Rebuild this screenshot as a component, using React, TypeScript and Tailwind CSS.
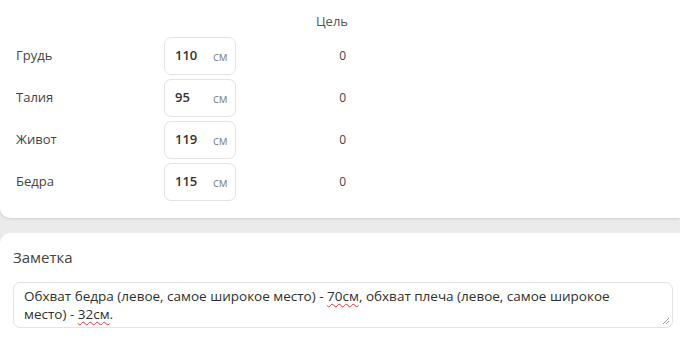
import React from "react";

const rows = [
  { label: "Грудь", value: "110" },
  { label: "Талия", value: "95" },
  { label: "Живот", value: "119" },
  { label: "Бедра", value: "115" },
];

export default function App() {
  return (
    <div
      className="w-[680px] h-[340px] overflow-hidden bg-[#ebebeb]"
      style={{ fontFamily: '"Open Sans", sans-serif' }}
    >
      <div className="bg-white rounded-bl-[10px] shadow-[0_1px_3px_rgba(0,0,0,0.12)] h-[218px] pl-[16px] pt-[12px]">
        <div className="flex h-[20px] items-center">
          <div className="w-[300px]" />
          <div className="text-[13px] text-[#555]">Цель</div>
        </div>
        <div className="flex flex-col gap-[4px] mt-[5px]">
          {rows.map((r) => (
            <div key={r.label} className="flex items-center h-[38px]">
              <div className="w-[148px] text-[13px] text-[#444]">{r.label}</div>
              <div className="w-[72px] h-[38px] border border-[#e3e3e3] rounded-[7px] flex items-center pl-[10px]">
                <span className="w-[38px] text-[13px] font-semibold text-[#333]">{r.value}</span>
                <span className="text-[12px] text-[#888] mt-[2px]">см</span>
              </div>
              <div className="w-[110px] text-right text-[12px] text-[#444]">0</div>
            </div>
          ))}
        </div>
      </div>
      <div className="mt-[15px] bg-white rounded-tl-[10px] h-[120px] pl-[13px] pr-[7px] pt-[14px]">
        <div className="text-[15px] text-[#444] leading-[20px]">Заметка</div>
        <div className="relative mt-[15px] h-[46px] border border-[#e3e3e3] rounded-[7px] pl-[10px] pr-[20px] pt-[4px] text-[13.5px] leading-[18px] text-[#2f2f2f]">
          Обхват бедра (левое, самое широкое место) -{" "}
          <span className="underline decoration-wavy decoration-[#e33] decoration-1 underline-offset-2">70см</span>, обхват плеча (левое, самое широкое место) -{" "}
          <span className="underline decoration-wavy decoration-[#e33] decoration-1 underline-offset-2">32см</span>.
          <svg className="absolute right-[2px] bottom-[2px]" width="8" height="8" viewBox="0 0 8 8">
            <path d="M7 1 L1 7 M7 4 L4 7" stroke="#999" strokeWidth="1" />
          </svg>
        </div>
      </div>
    </div>
  );
}
